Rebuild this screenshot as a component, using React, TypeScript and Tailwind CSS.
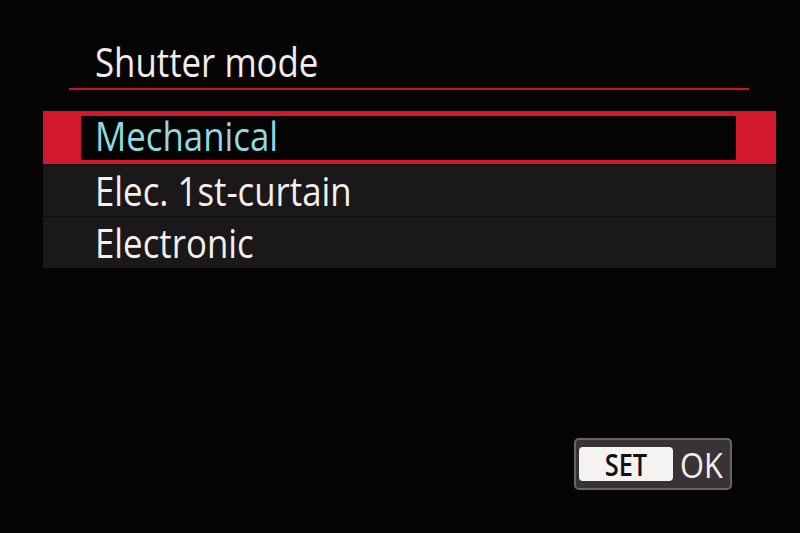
const FONT = "font-['Open_Sans','Liberation_Sans',sans-serif]";

const OPTIONS = ["Mechanical", "Elec. 1st-curtain", "Electronic"];

function Label({ text, className = "" }: { text: string; className?: string }) {
  return (
    <span
      className={`inline-block origin-left scale-x-[0.87] whitespace-nowrap text-[40px] leading-none ${className}`}
    >
      {text}
    </span>
  );
}

export default function App() {
  const selected = 0;

  return (
    <div className={`h-[533px] w-[800px] overflow-hidden bg-[#060505] pt-[42px] ${FONT}`}>
      <div className="h-[40px] pl-[95px]">
        <Label text="Shutter mode" className="text-[#f1ecec]" />
      </div>
      <div className="mt-[6px] ml-[69px] h-[2px] w-[680px] bg-[#c8132b]" />

      <div className="mt-[21px] ml-[43px] w-[733px]">
        {OPTIONS.map((option, i) =>
          i === selected ? (
            <div
              key={option}
              className="h-[53px] bg-[#d3172d] pt-[5px] pb-[4px] pl-[38px] pr-[40px]"
            >
              <div className="h-[44px] bg-[#050404] pl-[14px]">
                <Label text={option} className="text-[#93d8de]" />
              </div>
            </div>
          ) : (
            <div
              key={option}
              className="flex h-[52px] items-center border-t border-[#0c0a0b] bg-[#1b1819] pl-[52px] first:border-t-0"
            >
              <Label text={option} className="text-[#f3efef]" />
            </div>
          )
        )}
      </div>

      <div className="mt-[170px] flex justify-end pr-[68px]">
        <div className="flex h-[52px] w-[158px] items-center gap-[7px] rounded-[5px] border-2 border-[#6b6466] bg-[#3a3335] pl-[3px]">
          <div className="flex h-[34px] w-[94px] items-center justify-center rounded-[4px] bg-[#f5f2f2]">
            <span className="inline-block scale-x-[0.82] text-[31px] font-semibold leading-none text-[#111]">
              SET
            </span>
          </div>
          <span className="inline-block origin-left scale-x-[0.88] text-[35px] leading-none text-[#f3efef]">
            OK
          </span>
        </div>
      </div>
    </div>
  );
}
